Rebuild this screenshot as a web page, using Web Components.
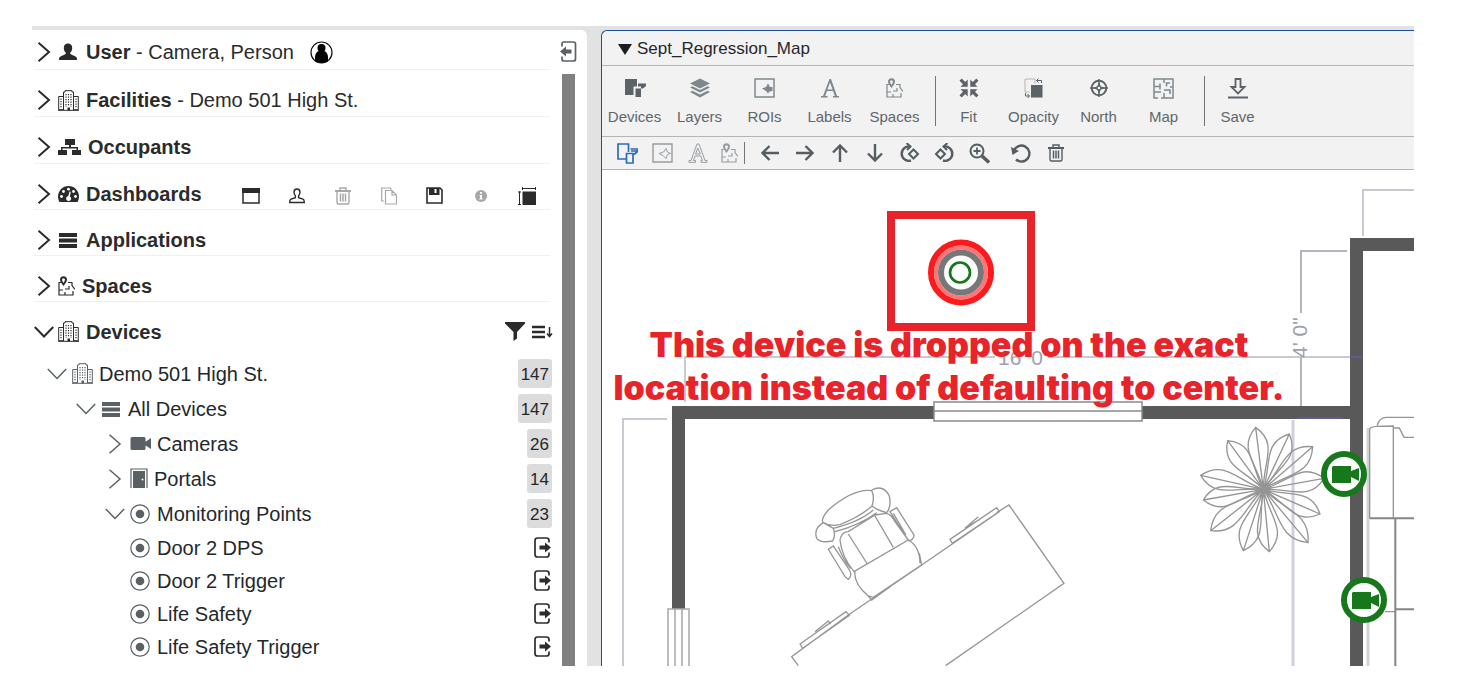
<!DOCTYPE html>
<html lang="en">
<head>
<meta charset="utf-8">
<title>Sept_Regression_Map</title>
<style>
  html, body { height: 100%; margin: 0; }
  body { box-sizing: border-box; padding: 26px 44px 20px 32px; background: #fff; font-family: "Liberation Sans", Arial, sans-serif; color: #2a2d30; }
</style>
</head>
<body>
<app-shell></app-shell>

<script>
const ICONS = {
  right: [20, 20, '<path d="M4.500 .800L15 10L4.500 19.200" fill="none" stroke="currentColor" stroke-width="var(--chev,2)"/>'],
  down: [20, 20, '<path d="M.800 5L10 14.500L19.200 5" fill="none" stroke="currentColor" stroke-width="var(--chev,2)"/>'],
  user: [21, 20, '<path d="M10 1.500c2.700 0 4.200 1.800 4.200 4.400 0 2-.8 3.600-1.900 4.500v1.700l5.200 2.300c1 .5 1.500 1.200 1.500 3.600H1c0-2.400.5-3.100 1.500-3.600l5.200-2.300v-1.700C6.600 9.500 5.800 7.900 5.800 5.900c0-2.600 1.500-4.400 4.200-4.400z" fill="currentColor"/>'],
  building: [21, 21, '<g fill="none" stroke="currentColor"><path d="M5.500 20V2h1.500V.700h7V2h1.500v18M5 6.500H.700v13.200H5M16 6.500h4.300v13.200H16M0 20.300h21" stroke-width="1"/><path d="M8 4v13M10.500 4v12M13 4v13M3 8.500v10M18 8.500v10" stroke-width="1.200" stroke-dasharray="1.300 1.200"/></g><path d="M9.500 17.500h2.500v3h-2.500z" fill="currentColor"/>'],
  org: [23, 18, '<path d="M7 1h10v6h-4v2h7v3h3v5h-9v-5h4.500v-1.500h-14V12H9v5H0v-5h3V9h8V7H7z" fill="currentColor"/>'],
  gauge: [21, 20, '<path d="M10.500 2C4.700 2 0 6.700 0 12.500c0 2 .6 3.800 1.500 5.500h18c.9-1.700 1.500-3.500 1.500-5.500C21 6.700 16.300 2 10.500 2z" fill="currentColor"/><g fill="#fff"><circle cx="3.500" cy="12.500" r="1.400"/><circle cx="5.500" cy="7.500" r="1.400"/><circle cx="10.500" cy="5.200" r="1.400"/><circle cx="15.500" cy="7.500" r="1.400"/><circle cx="17.500" cy="12.500" r="1.400"/><path d="M11.500 7.500l1.300.3-.9 4.700c1.300.7 1.700 2.300.8 3.500-1.100 1.400-3.700 1.100-4.400-.6-.6-1.500.4-3.100 2-3.300z"/></g>'],
  bars: [21, 18, '<path d="M1 2h18v4H1zM1 7.500h18v4H1zM1 13h18v4H1z" fill="currentColor"/>'],
  spaces: [17, 20, '<g fill="none" stroke="currentColor"><path d="M3 6.500H1v12.500h14v-4M1 14h4M7 19v-3M7 13h4v-3M10 6.500h4v3l3 4" stroke-width="1.200"/><path d="M5.500 8.500C3.500 6 3 5 3 3.700a2.500 2.500 0 015 0C8 5 7.500 6 5.500 8.500z" stroke-width="2"/></g>'],
  persona: [23, 23, '<circle cx="11.500" cy="11.500" r="10.500" fill="#fff" stroke="#111" stroke-width="1.200"/><circle cx="11.500" cy="7" r="4"/><path d="M5 17c0-4.500 2-6.700 4-7h5c2 .3 4 2.500 4 7v3c-3 2.500-10 2.500-13 0z"/>'],
  window: [18, 16, '<path d="M1 1h16v14H1z" fill="none" stroke="currentColor" stroke-width="1.500"/><path d="M0 0h18v5H0z" fill="currentColor"/>'],
  bust: [16, 16, '<path d="M8 1c2 0 3 1.300 3 3.200 0 1.600-.6 2.700-1.400 3.500v2l4.400 1.500c.9.400 1.300 1.300 1.300 3.300H.700c0-2 .4-2.900 1.300-3.300l4.400-1.500v-2C5.600 6.900 5 5.800 5 4.200 5 2.300 6 1 8 1z" fill="none" stroke="currentColor" stroke-width="1.400"/>'],
  trash: [16, 18, '<g fill="none" stroke="currentColor"><path d="M0 4h16" stroke-width="2"/><path d="M5 3.500V1h6v2.500M2 5v10.500q0 1.500 1.500 1.500h9q1.500 0 1.500-1.500V5" stroke-width="1.400"/><path d="M5.500 6.500v8M8 6.500v8M10.500 6.500v8" stroke-width="1.500"/></g>'],
  copy: [16, 18, '<path d="M4.500 3.500h6.500l4.500 4.500v9h-11zM11 3.500V8h4.500M3 14H.700V1H9l1.500 1.500" fill="none" stroke="currentColor" stroke-width="1.200"/>'],
  floppy: [17, 17, '<path d="M1 1h13l2 2v13H1z" fill="none" stroke="currentColor" stroke-width="1.600"/><path d="M3 1h10.500v7H3z" fill="currentColor"/><path d="M8.500 2h2v4h-2z" fill="#fff"/>'],
  info: [12, 12, '<circle cx="6" cy="6" r="6" fill="currentColor"/><path d="M5 2h2v1.700H5zM4.500 5H7v3.500h.7v1H4.300v-1H5V6h-.5z" fill="#fff"/>'],
  resize: [18, 18, '<path d="M4.500 4.500H18V18H4.500z" fill="currentColor"/><path d="M4.500 1.500H18M4.500 0v3M17.500 0v3M1.500 4.500V18M0 5h3M0 17.500h3" stroke="currentColor" fill="none"/>'],
  collapse: [17, 21, '<path d="M2 5.500V3q0-2 2-2h9.500q2 0 2 2v15q0 2-2 2H4q-2 0-2-2v-2.500" fill="none" stroke="currentColor" stroke-width="1.700"/><path d="M0 10.500L6 5.500v3h5.500v4H6v3z" fill="currentColor"/>'],
  expand: [17, 21, '<path d="M15 5.500V3.500Q15 1 12.500 1h-9Q1 1 1 3.500v14Q1 20 3.500 20h9q2.500 0 2.500-2.500v-2" fill="none" stroke="currentColor" stroke-width="1.700"/><path d="M17 10.500l-6-5v3H5.500v4H11v3z" fill="currentColor"/>'],
  filter: [20, 19, '<path d="M0 0h20v1.500L12 10v6.500L8.500 19v-9L0 1.500z" fill="currentColor"/>'],
  sort: [21, 14, '<path d="M0 2h13M0 7h13M0 12h13" stroke="currentColor" stroke-width="2.400"/><path d="M17.500 2v9M15 8.500l2.500 3 2.500-3" fill="none" stroke="currentColor" stroke-width="1.500"/>'],
  video: [21, 15, '<path d="M2 1h12q1.500 0 1.500 1.500v3.300L21 2v11l-5.500-3.500v3q0 1.500-1.500 1.500H2q-1.500 0-1.500-1.500v-10Q.500 1 2 1z" fill="currentColor"/>'],
  door: [18, 21, '<path d="M1 20V1h16v19" fill="none" stroke="currentColor" stroke-width="1.200"/><path d="M3 3h12v17H3z" fill="currentColor"/><circle cx="12.500" cy="11.500" r="1" fill="#fff"/>'],
  point: [21, 20, '<circle cx="10" cy="10" r="9.200" fill="none" stroke="currentColor" stroke-width="1.200"/><circle cx="10" cy="10" r="4.300" fill="currentColor"/>'],
  devices: [22, 20, '<path d="M1 1h12v7.500H9.500V17H1z M14 5.500H22V8l-3 2.500h-2V8.500h-3zM11.500 10.500H17V19h-5.500z" fill="currentColor"/>'],
  layers: [20, 20, '<path d="M10 .500L20 5.500 10 10.500 0 5.500z" fill="currentColor"/><path d="M0 9.500l2.500-1.200L10 12l7.500-3.700L20 9.500l-10 5zM0 14l2.500-1.200L10 16.500l7.500-3.700L20 14l-10 5.500z" fill="currentColor"/>'],
  roi: [21, 20, '<path d="M1 1h19v18H1z" fill="none" stroke="currentColor" stroke-width="1.500"/><path d="M8 10.500l4-1.500 2-3.500 2 3.500h2.500v4l-3 .5-1.500 2-2-2.500z" fill="currentColor"/>'],
  labels: [20, 20, '<path d="M9.500 1h1.500l6 17H19v1.500h-6V18h1.800l-1.700-5H7l-1.800 5H7.500v1.500H1V18h2L9.500 1zM10 4.500L7.400 11.500h5.200z" fill="currentColor"/>'],
  fit: [20, 20, '<path d="M8.700 8.700H1.500L4 6.200.500 2.700 2.700.500 6.200 4l2.500-2.500zM11.300 8.700V1.500L13.800 4 17.300.500l2.200 2.200L16 6.200l2.500 2.500zM8.700 11.300v7.200L6.200 16l-3.500 3.500L.500 17.300 4 13.800l-2.500-2.500zM11.300 11.300h7.200L16 13.800l3.500 3.500-2.200 2.200-3.500-3.500-2.500 2.500z" fill="currentColor"/>'],
  opacity: [19, 20, '<path d="M7 7h11.500v12.500H7z" fill="currentColor"/><path d="M5.500 14H1V1h10v4.500" fill="none" stroke="#b8b4b0"/><path d="M12.500 2.500h5V5M14.500.500l-2 2 2 2M1.500 15v3h4M3.500 16l2 2-2 2" fill="none" stroke="currentColor"/>'],
  north: [18, 18, '<circle cx="9" cy="9" r="7.300" fill="none" stroke="currentColor" stroke-width="2"/><path d="M9 0v5M9 13v5M0 9h5M13 9h5" stroke="currentColor" stroke-width="1.500"/><path d="M9 3l1.800 4.200L15 9l-4.200 1.800L9 15l-1.800-4.200L3 9l4.200-1.800z" fill="currentColor"/><circle cx="9" cy="9" r="1.300" fill="#f2f2f2"/>'],
  plan: [21, 21, '<path d="M1 4V1h19v19H8M1 4v16h4M1 8.500h6M7 5.500v6M11 1v4M13.500 8.500V5H17M20 9h-3M11 20v-5M1 14h7M11 12h6v4" fill="none" stroke="currentColor" stroke-width="1.500"/>'],
  save: [20, 21, '<path d="M7.500 1h5v8h4L10 15.500 3.500 9h4z" fill="none" stroke="currentColor" stroke-width="1.800"/><path d="M0 19.500h20" stroke="currentColor" stroke-width="2"/>'],
  devicesline: [21, 21, '<path d="M10 16H1V1h10.500v8M9.500 10.500H16V20H9.500zM13.500 6H21l-1 3-3 2.500M14 8h6" fill="none" stroke="currentColor" stroke-width="1.700"/>'],
  roiline: [21, 20, '<path d="M1 1h19v18H1z" fill="none" stroke="currentColor" stroke-width="1.400"/><path d="M7 10.500l4.500-1.500 2.500-3.500 1.500 3.500 3 1.500-3 1-1.500 4-3-3z" fill="none" stroke="currentColor"/>'],
  labelsline: [20, 20, '<path d="M9 1h2l6 16.500h2v1.800h-6v-1.800h1.300L12.800 13H7l-1.500 4.500h2v1.800H1v-1.800h2zM9.800 5L7.600 11h4.700z" fill="none" stroke="currentColor"/>'],
  left: [18, 18, '<path d="M18 9H2M8.500 2L1.500 9l7 7" fill="none" stroke="currentColor" stroke-width="2.400"/>'],
  rightarrow: [18, 18, '<path d="M0 9h16M9.500 2l7 7-7 7" fill="none" stroke="currentColor" stroke-width="2.400"/>'],
  up: [18, 18, '<path d="M9 18V2M2 8.500l7-7 7 7" fill="none" stroke="currentColor" stroke-width="2.400"/>'],
  downarrow: [18, 18, '<path d="M9 0v16M2 9.500l7 7 7-7" fill="none" stroke="currentColor" stroke-width="2.400"/>'],
  cw: [21, 20, '<path d="M11 3.500A7.200 7.200 0 1012 17.500" fill="none" stroke="currentColor" stroke-width="2.400"/><path d="M7.500 0L11.500 3.500 8 7M14.500 6.500l4.500 4.500-4.500 4.500L10 11z" fill="none" stroke="currentColor" stroke-width="2"/>'],
  ccw: [21, 20, '<path d="M10 3.500A7.200 7.200 0 119 17.500" fill="none" stroke="currentColor" stroke-width="2.400"/><path d="M13.500 0L9.500 3.500 13 7M6.500 6.500L11 11l-4.500 4.500L2 11z" fill="none" stroke="currentColor" stroke-width="2"/>'],
  zoom: [21, 21, '<circle cx="8" cy="8" r="6.500" fill="none" stroke="currentColor" stroke-width="2"/><path d="M8 4.500v7M4.500 8h7" stroke="currentColor" stroke-width="1.800"/><path d="M13 13l7 6.500" stroke="currentColor" stroke-width="3.500"/>'],
  undo: [20, 20, '<path d="M3 7.500A8 8 0 115 16.500" fill="none" stroke="currentColor" stroke-width="2.400"/><path d="M0 4l1.500 8L8 8z" fill="currentColor"/>'],
};

/* Gives each element an open shadow root with its own styles and markup. */
class Base extends HTMLElement {
  connectedCallback() {
    if (this.shadowRoot) return;
    const t = document.createElement('template');
    t.innerHTML = this.view();
    this.attachShadow({ mode: 'open' }).append(t.content.cloneNode(true));
  }
}
const attr = (el, n, d = '') => el.getAttribute(n) ?? d;

customElements.define('app-icon', class extends Base {
  view() {
    const [w, h, art] = ICONS[attr(this, 'name')];
    return `<style>:host{display:block;flex:none;width:${w}px;height:${h}px}svg{display:block}</style>
      <svg width="${w}" height="${h}" viewBox="0 0 ${w} ${h}" aria-hidden="true">${art}</svg>`;
  }
});

customElements.define('icon-button', class extends Base {
  view() {
    return `<style>
      :host{display:block;flex:none}
      button{display:flex;align-items:center;justify-content:center;width:100%;height:100%;margin:0;padding:0;border:0;background:none;color:inherit;cursor:pointer}
    </style><button type="button" aria-label="${attr(this, 'label')}"><app-icon name="${attr(this, 'icon')}"></app-icon></button>`;
  }
});

customElements.define('tool-button', class extends Base {
  view() {
    return `<style>
      :host{display:block;flex:none;width:65px}
      button{display:flex;flex-direction:column;align-items:center;gap:7px;width:100%;margin:0;padding:0;border:0;background:none;font:15px/20px "Liberation Sans",Arial,sans-serif;color:#5f676b;cursor:pointer}
      span{display:flex;align-items:center;height:24px;color:var(--icon,#7f888c)}
    </style><button type="button"><span><app-icon name="${attr(this, 'icon')}"></app-icon></span><slot></slot></button>`;
  }
});

customElements.define('nav-section', class extends Base {
  view() {
    const open = this.hasAttribute('open');
    return `<style>
      :host{display:flex;align-items:center;box-sizing:border-box;height:47px;margin:0 3px 0 2px;padding-top:14px;border-bottom:1px solid #f0f0f0;color:#2b2b2b}
      :host([first]){height:40px;padding-top:5px}
      :host([compact]){height:46px}
      :host([open]){height:54px;padding-bottom:9px;border:0;margin-right:0}
      button{display:flex;align-items:center;margin:0;padding:0;border:0;background:none;font:20px/24px "Liberation Sans",Arial,sans-serif;color:inherit;white-space:nowrap;cursor:pointer}
      .icon{margin:0 7px 0 4px}
    </style>
    <button type="button" aria-expanded="${open}"><app-icon name="${open ? 'down' : 'right'}"></app-icon><app-icon class="icon" name="${attr(this, 'icon')}"></app-icon><span><slot></slot></span></button>
    <slot name="tools"></slot>`;
  }
});

customElements.define('tree-item', class extends Base {
  view() {
    const level = +attr(this, 'level', 1), state = attr(this, 'state'), count = attr(this, 'count');
    return `<style>
      :host{display:flex;align-items:center;justify-content:space-between;height:35px;padding-left:${15 + 29 * (level - 1)}px;--chev:1.500}
      :host(:not([count])){height:33px}
      button{display:flex;align-items:center;margin:0;padding:0;border:0;background:none;font:20px/24px "Liberation Sans",Arial,sans-serif;color:#24282c;white-space:nowrap;cursor:pointer}
      app-icon{color:#596165}
      .twist{width:20px;margin-right:5px}
      .icon{margin-right:6px}
      .count{box-sizing:border-box;height:29px;padding:0 3px;border-radius:3px;background:#dcdcdc;font-size:17px;line-height:31px;color:#24282c}
      icon-button{width:20px;height:24px}
    </style>
    <button type="button"><span class="twist">${state ? `<app-icon name="${state}"></app-icon>` : ''}</span><app-icon class="icon" name="${attr(this, 'icon')}"></app-icon><slot></slot></button>
    ${count ? `<span class="count">${count}</span>` : '<icon-button icon="expand" label="Open device"></icon-button>'}`;
  }
});

customElements.define('side-panel', class extends Base {
  view() {
    return `<style>
      :host{display:flex;min-width:0;overflow:hidden;background:#fff;border-top-right-radius:6px}
      nav{flex:1;min-width:0}
      .rail{display:flex;flex-direction:column;align-items:center;gap:12px;width:31px;padding:11px 3px 0 0;color:#596165}
      .rail icon-button{width:20px;height:21px}
      .bar{flex:1;width:13px;background:#808080}
      .persona{margin-left:16px}
      .dash{display:flex;margin:4px 0 0 26px}
      .dash icon-button{width:46px;height:24px}
      .off{color:#a8a8a8}
      .end{display:flex;align-items:center;gap:7px;margin-left:auto}
      .end icon-button{height:24px}
      .tree{padding-right:1px}
    </style>
    <nav aria-label="Sections">
      <nav-section first icon="user"><b>User</b> - Camera, Person<app-icon slot="tools" class="persona" name="persona"></app-icon></nav-section>
      <nav-section icon="building"><b>Facilities</b> - Demo 501 High St.</nav-section>
      <nav-section icon="org"><b>Occupants</b></nav-section>
      <nav-section compact icon="gauge"><b>Dashboards</b>
        <div slot="tools" class="dash">
          <icon-button icon="window" label="Window"></icon-button>
          <icon-button icon="bust" label="User"></icon-button>
          <icon-button class="off" icon="trash" label="Delete"></icon-button>
          <icon-button class="off" icon="copy" label="Copy"></icon-button>
          <icon-button icon="floppy" label="Save"></icon-button>
          <icon-button class="off" icon="info" label="Info"></icon-button>
          <icon-button icon="resize" label="Resize"></icon-button>
        </div>
      </nav-section>
      <nav-section compact icon="bars"><b>Applications</b></nav-section>
      <nav-section compact icon="spaces"><b>Spaces</b></nav-section>
      <nav-section open icon="building"><b>Devices</b>
        <div slot="tools" class="end"><icon-button icon="filter" label="Filter"></icon-button><icon-button icon="sort" label="Sort"></icon-button></div>
      </nav-section>
      <div class="tree">
        <tree-item level="1" state="down" icon="building" count="147">Demo 501 High St.</tree-item>
        <tree-item level="2" state="down" icon="bars" count="147">All Devices</tree-item>
        <tree-item level="3" state="right" icon="video" count="26">Cameras</tree-item>
        <tree-item level="3" state="right" icon="door" count="14">Portals</tree-item>
        <tree-item level="3" state="down" icon="point" count="23">Monitoring Points</tree-item>
        <tree-item level="3" icon="point">Door 2 DPS</tree-item>
        <tree-item level="3" icon="point">Door 2 Trigger</tree-item>
        <tree-item level="3" icon="point">Life Safety</tree-item>
        <tree-item level="3" icon="point">Life Safety Trigger</tree-item>
      </div>
    </nav>
    <div class="rail"><icon-button icon="collapse" label="Collapse panel"></icon-button><div class="bar"></div></div>`;
  }
});

customElements.define('floor-plan', class extends Base {
  view() {
    const tips = [[227, 52], [328, 72], [398, 110], [432, 205], [420, 312], [384, 398], [268, 425], [190, 422], [92, 362], [70, 270], [62, 196], [143, 92]];
    const cx = 250, cy = 238;
    const leaf = ([x, y]) => {
      const dx = x - cx, dy = y - cy, L = Math.hypot(dx, dy), nx = -dy / L * 36, ny = dx / L * 36;
      const p = (t, s) => `${(cx + dx * t + nx * s).toFixed(0)} ${(cy + dy * t + ny * s).toFixed(0)}`;
      return `M${cx} ${cy}C${p(.45, .3)} ${p(.7, 1.700)} ${x} ${y}C${p(.7, -1.700)} ${p(.45, -.3)} ${cx} ${cy}L${x} ${y}`;
    };
    const cam = (x, y) => `<g transform="translate(${x} ${y})"><circle r="20" fill="#fff" stroke="#17771b" stroke-width="6"/><path d="M-11-8H7V-3L15-6V7L7 3V9H-12V-7Z" fill="#17771b"/></g>`;
    return `<style>
      :host{display:block;position:relative;min-height:0;overflow:hidden;background:#fff}
      svg{display:block;width:100%;height:100%}
      text{font-family:"Liberation Sans",Arial,sans-serif}
      .note{font:900 34px Inter,"Liberation Sans",sans-serif;fill:#e8232a}
    </style>
    <svg viewBox="602 170 812 496" preserveAspectRatio="xMinYMin slice" role="img" aria-label="Floor plan">
      <g fill="none" stroke="#c9c9d1" stroke-width="2">
        <path d="M667 419H623V666M685 402V357H995M1048 357H1350M1363 236V190H1414" />
        <path d="M1347 251H1301V313M1301 357V406" stroke="#b4b4bd"/>
        <path d="M1293 420V666" stroke="#d0cfdc" stroke-width="3"/>
        <path d="M1368 428V666" stroke="#d4d4d4" stroke-width="3"/>
      </g>
      <g fill="#a0a0ad" font-size="21"><text x="998" y="365">16' 0"</text><text transform="translate(1307 358) rotate(-90)">4' 0"</text></g>
      <path d="M672 406H1350V238H1414V251H1363V666H1350V419H685V609H672Z" fill="#595959"/>
      <path d="M1350 357h13M1297 418h46" stroke="#5f5b93" stroke-width="2"/>
      <g fill="#fff" stroke="#8a8a8a" stroke-width="1.500"><path d="M934 402H1142V421H934ZM934 411H1142"/><path d="M668 609H689V670H668ZM675 609V670M682 609V670" stroke="#a8a8a8"/></g>
      <g transform="translate(1180 410) scale(.3333)" fill="none" stroke="#959595" stroke-width="4">
        ${tips.map(t => `<path d="${leaf(t)}"/>`).join('')}
        <path d="M569 325V60Q569 50 590 49L640 48V325M592 46Q598 22 620 22H702M640 54H658L672 82H702M615 605H645" />
        <path d="M569 325H702M646 325V768M646 598H702" stroke="#858585" stroke-width="6"/>
      </g>
      <g transform="translate(780 460) scale(.3333)" fill="none" stroke="#969696" stroke-width="4">
        <path d="M497 617L852 370L687 135L650 158M658 155L425 315L205 465L35 590L55 617M510 238L650 143L658 155L517 250ZM555 205L595 170M565 198L600 178M60 552L198 455L208 466L68 565ZM105 515L145 483L152 492"/>
        <path d="M275 92Q220 85 145 150Q120 180 130 188Q150 200 180 194Q240 170 276 138Q285 110 275 92ZM275 90Q310 72 328 108Q335 140 320 158Q290 150 276 138M130 188Q100 205 110 235Q120 250 158 243Q168 225 160 205ZM160 205Q240 185 280 150M165 215Q240 195 290 158M180 240Q185 215 205 215L285 165L320 160Q335 165 345 185L385 240M205 222L262 312M285 168L340 262M180 240Q185 290 222 335L385 240Q420 260 420 310M225 335Q220 370 265 408L280 412L425 315L418 280M330 155L350 143L402 225Q402 240 385 242ZM340 160L378 225M145 268L160 258L205 325Q220 345 205 358L195 350ZM175 260Q190 300 212 325M265 408L275 420L330 380"/>
      </g>
      ${cam(1344, 474)}${cam(1364, 600)}
      <rect x="891" y="215" width="140" height="112" fill="none" stroke="#e8232a" stroke-width="8"/>
      <circle cx="961" cy="272.500" r="30" fill="#fff" stroke="#fd1a1c" stroke-width="6"/>
      <circle cx="961" cy="272.500" r="25" fill="#fff" stroke="#ff7577" stroke-width="4"/>
      <circle cx="961" cy="272.500" r="20" fill="#fff" stroke="#777" stroke-width="6"/>
      <circle cx="960" cy="272.500" r="10" fill="none" stroke="#17771b" stroke-width="2.700"/>
      <text class="note" text-anchor="middle" x="949" y="357">This device is dropped on the exact</text>
      <text class="note" text-anchor="middle" x="949" y="400">location instead of defaulting to center.</text>
    </svg>`;
  }
});

customElements.define('map-panel', class extends Base {
  view() {
    return `<style>
      :host{display:grid;grid-template-rows:35px 71px 33px minmax(0,1fr);min-width:0;overflow:hidden;background:#f2f2f2;border:solid #1c4f9c;border-width:1px 0 0 1px;border-top-left-radius:6px}
      header,.tools,.edit{box-sizing:border-box;border-bottom:1px solid #b5b5b5}
      header{display:flex;align-items:center;padding-left:16px}
      header button{display:flex;align-items:center;gap:5px;margin:0;padding:2px 0 0;border:0;background:none;font:17px/22px "Liberation Sans",Arial,sans-serif;color:#24282c;cursor:pointer}
      .tri{width:0;height:0;border:solid transparent;border-width:11px 7px 0;border-top-color:#1d1d1d}
      .tools{display:flex;padding-top:10px}
      .dark{--icon:#5c6367}
      hr{flex:none;width:1px;height:50px;margin:0 0 0 8px;border:0;background:#6f7578}
      .edit{display:flex;align-items:center;padding-left:8px;color:#555d61}
      .edit icon-button{width:35px;height:30px}
      .edit icon-button.narrow{width:29px}
      .edit hr{height:22px;margin:0 7px 0 0}
      .edit .blue{color:#2b6cb8}
      .edit .off{color:#969da0}
      .edit .gap{margin-left:6px}
    </style>
    <header><button type="button" aria-expanded="true"><span class="tri"></span>Sept_Regression_Map</button></header>
    <div class="tools" role="toolbar" aria-label="Map tools">
      <tool-button class="dark" icon="devices">Devices</tool-button>
      <tool-button icon="layers">Layers</tool-button>
      <tool-button icon="roi">ROIs</tool-button>
      <tool-button icon="labels">Labels</tool-button>
      <tool-button icon="spaces">Spaces</tool-button>
      <hr>
      <tool-button class="dark" icon="fit">Fit</tool-button>
      <tool-button class="dark" icon="opacity">Opacity</tool-button>
      <tool-button class="dark" icon="north">North</tool-button>
      <tool-button icon="plan">Map</tool-button>
      <hr>
      <tool-button class="dark" icon="save">Save</tool-button>
    </div>
    <div class="edit" role="toolbar" aria-label="Edit tools">
      <icon-button class="blue" icon="devicesline" label="Device mode"></icon-button>
      <icon-button class="off" icon="roiline" label="ROI mode"></icon-button>
      <icon-button class="off" icon="labelsline" label="Label mode"></icon-button>
      <icon-button class="off narrow" icon="spaces" label="Space mode"></icon-button>
      <hr>
      <icon-button icon="left" label="Move left"></icon-button>
      <icon-button icon="rightarrow" label="Move right"></icon-button>
      <icon-button icon="up" label="Move up"></icon-button>
      <icon-button icon="downarrow" label="Move down"></icon-button>
      <icon-button icon="cw" label="Rotate clockwise"></icon-button>
      <icon-button icon="ccw" label="Rotate counterclockwise"></icon-button>
      <icon-button icon="zoom" label="Zoom in"></icon-button>
      <icon-button class="gap" icon="undo" label="Undo"></icon-button>
      <icon-button icon="trash" label="Delete"></icon-button>
    </div>
    <floor-plan></floor-plan>`;
  }
});

customElements.define('app-shell', class extends Base {
  view() {
    return `<style>
      :host{display:grid;grid-template-columns:minmax(0,555fr) minmax(0,813fr);grid-template-rows:minmax(0,1fr);gap:14px;box-sizing:border-box;height:100%;padding-top:4px;overflow:hidden;background:#e2e2e2}
    </style><side-panel></side-panel><map-panel></map-panel>`;
  }
});
</script>
</body>
</html>
